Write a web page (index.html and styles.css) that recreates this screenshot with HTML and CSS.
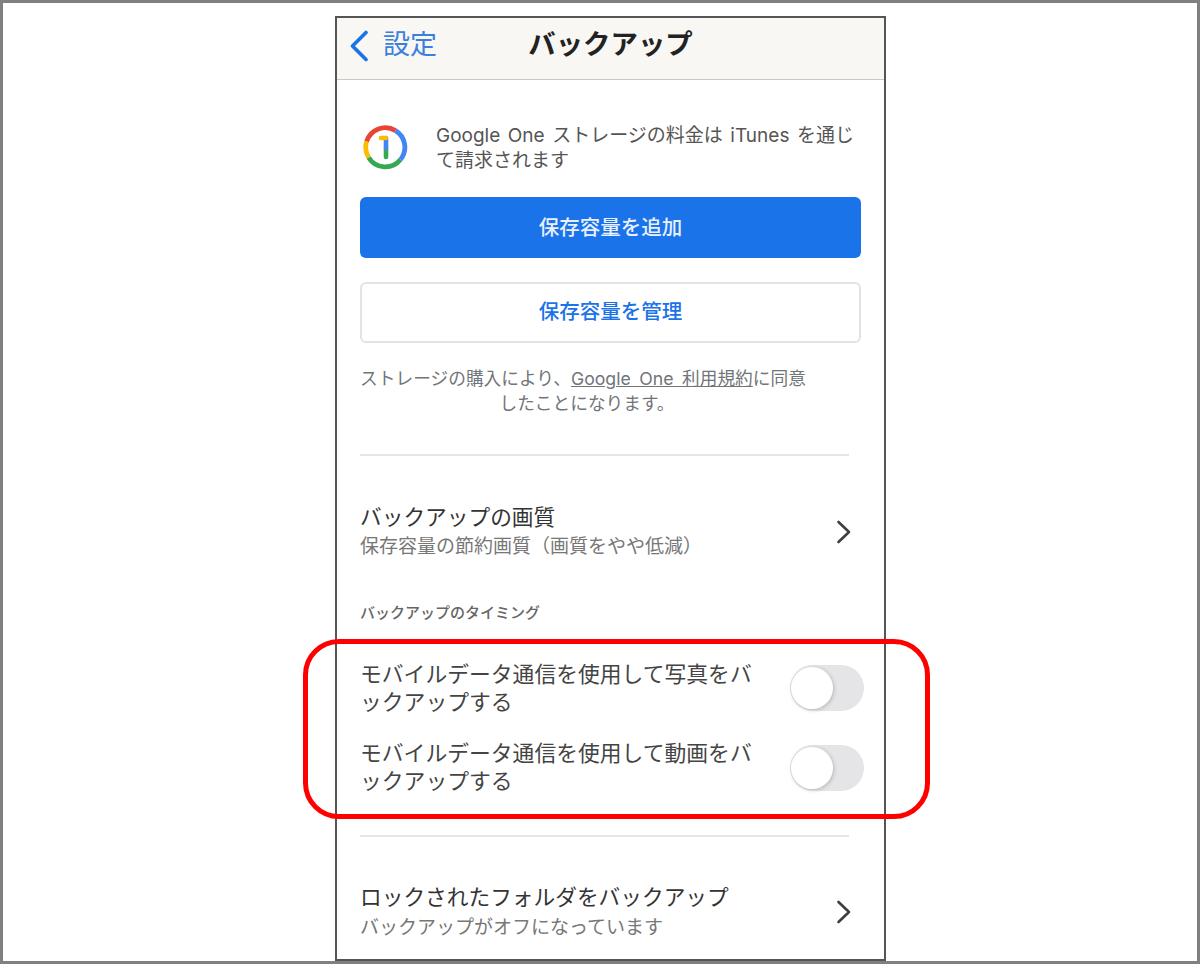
FILE: index.html
```html
<!DOCTYPE html>
<html lang="ja">
<head>
<meta charset="utf-8">
<title>バックアップ</title>
<link rel="stylesheet" href="styles.css">
</head>
<body>
<div class="frame">
  <main class="phone">
    <header class="nav">
      <div class="back">
        <svg class="back-icon" width="20" height="32" viewBox="0 0 20 32"><path d="M17 2.5 3.5 16 17 29.5" fill="none" stroke="#1a73e8" stroke-width="3.6" stroke-linecap="round" stroke-linejoin="round"/></svg>
        <span class="back-label">設定</span>
      </div>
      <h1 class="title">バックアップ</h1>
    </header>
    <section class="content">
      <div class="promo">
        <svg class="one-logo" width="46" height="46" viewBox="0 0 46 46">
          <g fill="none" stroke-width="4.8">
            <path d="M4.6 17.5A19.5 19.5 0 0 1 33.5 6.6" stroke="#ea4335"/>
            <path d="M33.5 6.6A19.5 19.5 0 0 1 38.5 35.5" stroke="#4285f4"/>
            <path d="M38.5 35.5A19.5 19.5 0 0 1 6.6 33.5" stroke="#34a853"/>
            <path d="M6.6 33.5A19.5 19.5 0 0 1 4.6 17.5" stroke="#fbbc04"/>
          </g>
          <path d="M24 24V33" stroke="#34a853" stroke-width="4.6" stroke-linecap="round"/>
          <path d="M24 24V14" stroke="#4285f4" stroke-width="4.6" stroke-linecap="round"/>
          <path d="M24 14H19" stroke="#fbbc04" stroke-width="4.6" stroke-linecap="round"/>
        </svg>
        <p class="promo-text">Google One ストレージの料金は iTunes を通じ<br>て請求されます</p>
      </div>
      <div class="btn btn-primary">保存容量を追加</div>
      <div class="btn btn-outline">保存容量を管理</div>
      <p class="legal">ストレージの購入により、<span class="legal-link">Google One 利用規約</span>に同意<br><span class="legal-end">したことになります。</span></p>
      <hr class="rule rule-first">
      <div class="row row-quality">
        <div>
          <div class="row-title">バックアップの画質</div>
          <div class="row-sub">保存容量の節約画質（画質をやや低減）</div>
        </div>
        <svg class="chevron" width="16" height="24" viewBox="0 0 16 24"><path d="M2.5 2 13 12 2.5 22" fill="none" stroke="#3c4043" stroke-width="2.6" stroke-linecap="round" stroke-linejoin="round"/></svg>
      </div>
      <div class="section-label">バックアップのタイミング</div>
      <div class="toggle-row toggle-first">
        <div class="toggle-text">モバイルデータ通信を使用して写真をバ<br>ックアップする</div>
        <div class="switch"><div class="knob"></div></div>
      </div>
      <div class="toggle-row toggle-second">
        <div class="toggle-text">モバイルデータ通信を使用して動画をバ<br>ックアップする</div>
        <div class="switch"><div class="knob"></div></div>
      </div>
      <hr class="rule rule-second">
      <div class="row row-locked">
        <div>
          <div class="row-title">ロックされたフォルダをバックアップ</div>
          <div class="row-sub">バックアップがオフになっています</div>
        </div>
        <svg class="chevron" width="16" height="24" viewBox="0 0 16 24"><path d="M2.5 2 13 12 2.5 22" fill="none" stroke="#3c4043" stroke-width="2.6" stroke-linecap="round" stroke-linejoin="round"/></svg>
      </div>
    </section>
  </main>
  <div class="highlight"></div>
</div>
</body>
</html>
```
FILE: styles.css
```css
* { box-sizing: border-box; }
html, body { margin: 0; padding: 0; }
body {
  width: 1200px;
  height: 964px;
  overflow: hidden;
  background: #fff;
  font-family: Inter, "Noto Sans CJK JP", "Noto Sans", sans-serif;
}
.frame {
  position: relative;
  width: 1200px;
  height: 964px;
  border: 3px solid #808080;
  padding-top: 13px;
  padding-left: 332px;
  overflow: hidden;
}
.phone {
  width: 551px;
  height: 945px;
  border: 2px solid #555;
  overflow: hidden;
  background: #fff;
}
.nav {
  position: relative;
  height: 62px;
  padding-bottom: 9px;
  background: #f8f7f4;
  border-bottom: 1px solid #c9c9c9;
  display: flex;
  align-items: center;
  justify-content: center;
}
.back {
  position: absolute;
  left: 12px;
  top: 11px;
  display: flex;
  align-items: center;
  gap: 14px;
  color: #3a80dc;
  font-size: 27px;
  line-height: 34px;
}
.back-label { margin-top: -1px; }
.title {
  margin: 0;
  font-size: 27.4px;
  line-height: 34px;
  font-weight: 700;
  color: #222;
}
.content { padding: 0 24px 0 23px; }
.promo {
  display: flex;
  align-items: flex-start;
  gap: 28px;
  padding-top: 43px;
  padding-left: 2px;
}
.one-logo { flex: none; margin-top: 1px; }
.promo-text {
  margin: 0;
  font-size: 19px;
  line-height: 25px;
  word-spacing: 2.2px;
  color: #555;
  white-space: nowrap;
}
.btn {
  width: 501px;
  height: 61px;
  padding-bottom: 3px;
  border-radius: 6px;
  display: flex;
  align-items: center;
  justify-content: center;
  font-size: 20.5px;
  font-weight: 500;
}
.btn-primary {
  margin-top: 24px;
  background: #1a73e8;
  color: #e8f0fe;
}
.btn-outline {
  margin-top: 24px;
  padding-bottom: 5px;
  border: 2px solid #e2e3e5;
  color: #1a73e8;
}
.legal {
  margin: 23px 0 0;
  width: 446px;
  text-align: center;
  font-size: 17.7px;
  line-height: 25px;
  word-spacing: 3.5px;
  color: #70757a;
}
.legal-link { text-decoration: underline; color: #70757a; }
.legal-end { padding-left: 8px; }
.rule {
  margin: 0;
  border: 0;
  height: 2px;
  width: 489px;
  background: #e6e6e6;
}
.rule-first { margin-top: 38px; }
.row {
  display: flex;
  align-items: center;
  justify-content: space-between;
  width: 492px;
}
.chevron { margin-top: 0; }
.row-quality { margin-top: 46px; }
.row-title {
  font-size: 21.7px;
  line-height: 30px;
  color: #333;
  white-space: nowrap;
}
.row-sub {
  padding-top: 1px;
  font-size: 19px;
  line-height: 28px;
  color: #777;
  white-space: nowrap;
}
.row-locked .row-sub { padding-top: 2px; }
.section-label {
  margin-top: 41px;
  font-size: 15px;
  line-height: 22px;
  font-weight: 500;
  color: #666;
}
.toggle-row {
  display: flex;
  align-items: center;
  justify-content: space-between;
  width: 504px;
}
.toggle-first { margin-top: 36px; }
.toggle-second { margin-top: 23px; }
.toggle-text {
  font-size: 21.8px;
  line-height: 28px;
  color: #444;
  white-space: nowrap;
}
.switch {
  position: relative;
  flex: none;
  width: 74px;
  height: 46px;
  margin-top: 2px;
  border-radius: 23px;
  background: #e5e5e7;
}
.toggle-first .switch { margin-top: 0; }
.knob {
  position: absolute;
  left: 1px;
  top: 2px;
  width: 42px;
  height: 42px;
  border-radius: 50%;
  background: #fff;
  box-shadow: 1px 1px 4px rgba(0, 0, 0, 0.2);
}
.rule-second { margin-top: 40px; }
.row-locked { margin-top: 45px; }
.highlight {
  position: absolute;
  left: 300px;
  top: 636px;
  width: 627px;
  height: 180px;
  border: 5px solid #f00;
  border-radius: 36px;
}
```
